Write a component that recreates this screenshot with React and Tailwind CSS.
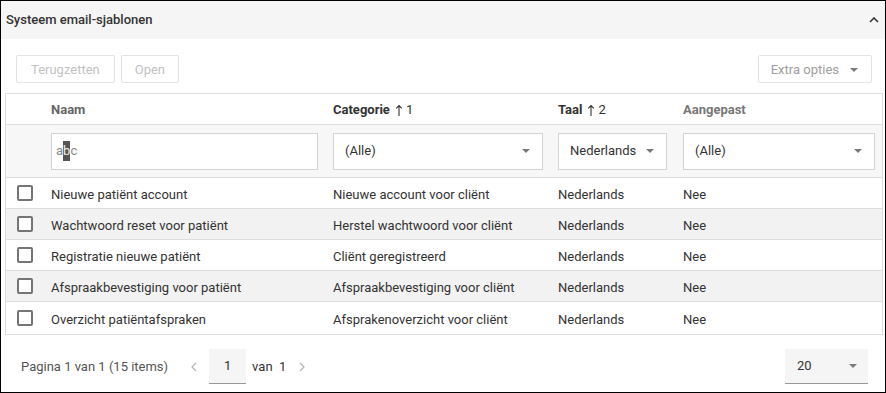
import React from 'react';

const rows = [
  { naam: 'Nieuwe patiënt account', cat: 'Nieuwe account voor cliënt', taal: 'Nederlands', aangepast: 'Nee' },
  { naam: 'Wachtwoord reset voor patiënt', cat: 'Herstel wachtwoord voor cliënt', taal: 'Nederlands', aangepast: 'Nee' },
  { naam: 'Registratie nieuwe patiënt', cat: 'Cliënt geregistreerd', taal: 'Nederlands', aangepast: 'Nee' },
  { naam: 'Afspraakbevestiging voor patiënt', cat: 'Afspraakbevestiging voor cliënt', taal: 'Nederlands', aangepast: 'Nee' },
  { naam: 'Overzicht patiëntafspraken', cat: 'Afsprakenoverzicht voor cliënt', taal: 'Nederlands', aangepast: 'Nee' },
];

const Caret = ({ className = '' }) => (
  <svg width="8" height="4" viewBox="0 0 8 4" className={className}>
    <path d="M0 0 L8 0 L4 4 Z" fill="#7a7a7a" />
  </svg>
);

const SortUp = () => (
  <svg width="8" height="12" viewBox="0 0 8 12" className="ml-[5px] mr-[3px]">
    <path d="M4 1.5 V12 M1.2 4.3 L4 1.5 L6.8 4.3" stroke="#333" strokeWidth="1.1" fill="none" />
  </svg>
);

const Chevron = ({ dir }) => (
  <svg width="6" height="10" viewBox="0 0 6 10">
    <path d={dir === 'left' ? 'M5 1 L1 5 L5 9' : 'M1 1 L5 5 L1 9'} stroke="#b5b5b5" strokeWidth="1.2" fill="none" />
  </svg>
);

const SelectBox = ({ value }) => (
  <div className="h-[37px] border border-[#d3d3d3] bg-white flex items-center justify-between pl-[11px] pr-[12px]">
    <span>{value}</span>
    <Caret />
  </div>
);

const Checkbox = () => (
  <div className="w-[16px] h-[16px] border-2 border-[#757575] rounded-[2px] bg-white" />
);

const grid = 'grid grid-cols-[45px_282px_225px_125px_1fr]';

const App = () => {
  return (
    <div
      className="w-[886px] h-[393px] border border-black bg-white text-[13px] text-[#333] overflow-hidden"
      style={{ fontFamily: 'Roboto, "Liberation Sans", sans-serif' }}
    >
      <div className="h-[38px] bg-[#f5f5f5] flex items-center justify-between pl-[5px] pr-[6px]">
        <span className="font-medium text-[#333]">Systeem email-sjablonen</span>
        <svg width="10" height="6" viewBox="0 0 10 6">
          <path d="M1 5 L5 1 L9 5" stroke="#333" strokeWidth="1.6" fill="none" />
        </svg>
      </div>

      <div className="flex items-center justify-between pt-[16px] pl-[15px] pr-[13px]">
        <div className="flex gap-[6px]">
          <button className="h-[28px] pt-[2px] px-[14px] border border-[#e3e3e3] rounded-[2px] text-[#c2c2c2] bg-white">Terugzetten</button>
          <button className="h-[28px] pt-[2px] px-[13px] border border-[#e3e3e3] rounded-[2px] text-[#c2c2c2] bg-white">Open</button>
        </div>
        <button className="h-[28px] pt-[2px] pl-[12px] pr-[13px] border border-[#e3e3e3] rounded-[2px] text-[#9e9e9e] bg-white flex items-center gap-[11px]">
          Extra opties
          <Caret />
        </button>
      </div>

      <div className="mt-[10px] ml-[4px] mr-[2px] border border-[#dddddd]">
        <div className={`${grid} h-[31px] pt-[2px] items-center font-bold border-b border-[#dddddd]`}>
          <div />
          <div className="text-[#666]">Naam</div>
          <div className="flex items-center text-[#333]">
            Categorie<SortUp /><span className="font-normal">1</span>
          </div>
          <div className="flex items-center text-[#333]">
            Taal<SortUp /><span className="font-normal">2</span>
          </div>
          <div className="text-[#777]">Aangepast</div>
        </div>

        <div className={`${grid} h-[53px] items-center bg-[#f7f7f7] border-b border-[#dddddd]`}>
          <div />
          <div className="pr-[15px]">
            <div className="h-[37px] border border-[#d3d3d3] bg-white flex items-center pl-[4px] text-[#888]">
              <span>a</span>
              <span className="bg-[#555] text-[#eee]">b</span>
              <span>c</span>
            </div>
          </div>
          <div className="pr-[15px]">
            <SelectBox value="(Alle)" />
          </div>
          <div className="pr-[16px]">
            <SelectBox value="Nederlands" />
          </div>
          <div className="pr-[7px]">
            <SelectBox value="(Alle)" />
          </div>
        </div>

        {rows.map((r, i) => (
          <div
            key={r.naam}
            className={`${grid} items-center ${i === rows.length - 1 ? 'h-[32px]' : 'h-[31px] border-b border-[#dddddd]'} ${i % 2 === 1 ? 'bg-[#f2f2f2]' : 'bg-white'}`}
          >
            <div className="pl-[11px]">
              <Checkbox />
            </div>
            <div className="pt-[3px]">{r.naam}</div>
            <div className="pt-[3px]">{r.cat}</div>
            <div className="pt-[3px]">{r.taal}</div>
            <div className="pt-[3px]">{r.aangepast}</div>
          </div>
        ))}
      </div>

      <div className="flex items-center justify-between pt-[14px] pl-[20px] pr-[17px]">
        <div className="flex items-center">
          <span className="text-[#555]">Pagina 1 van 1 (15 items)</span>
          <span className="ml-[23px]"><Chevron dir="left" /></span>
          <div className="ml-[12px] w-[37px] h-[35px] bg-[#f5f5f5] border-b border-[#999] flex items-center justify-center">1</div>
          <span className="ml-[6px]">van&nbsp;&nbsp;1</span>
          <span className="ml-[13px]"><Chevron dir="right" /></span>
        </div>
        <div className="w-[83px] h-[35px] bg-[#f5f5f5] border-b border-[#999] flex items-center justify-between pl-[12px] pr-[11px]">
          <span>20</span>
          <Caret />
        </div>
      </div>
    </div>
  );
};

export default App;
